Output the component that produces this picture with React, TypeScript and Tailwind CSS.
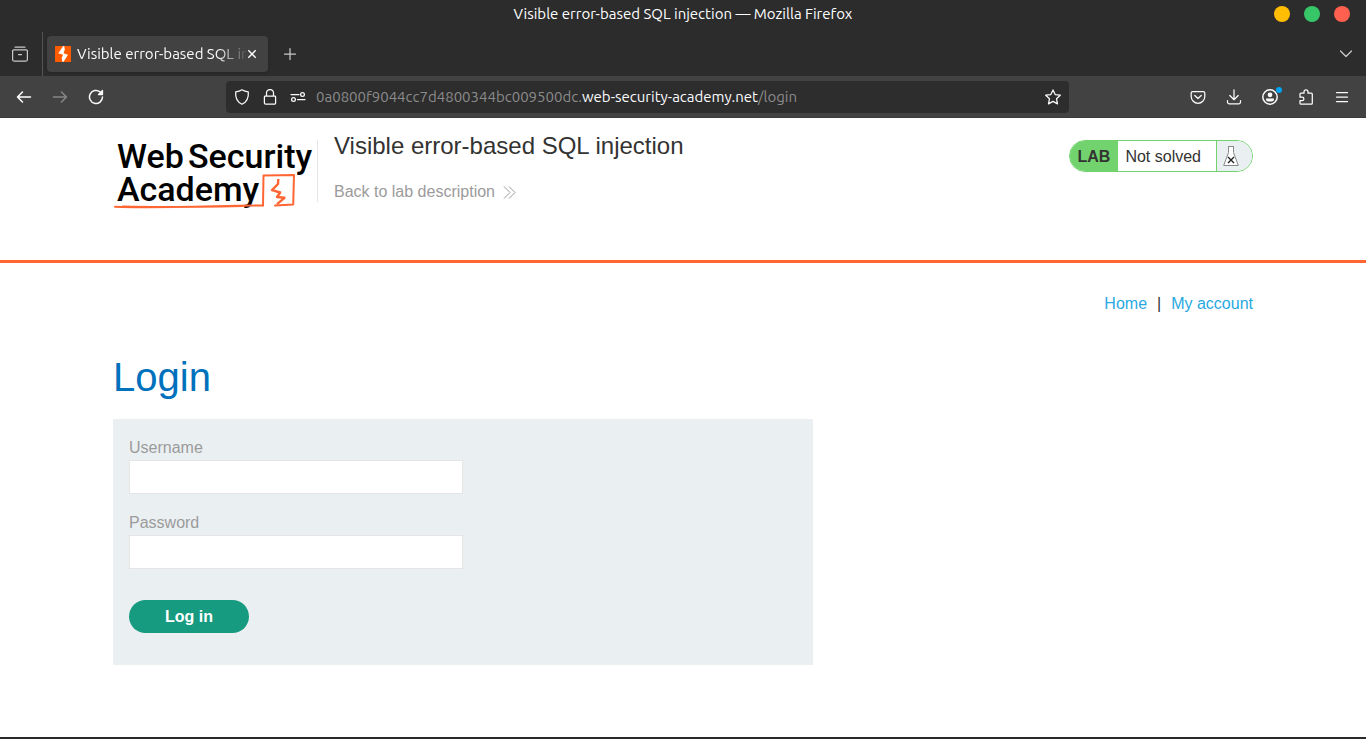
import type { ReactNode } from "react";

const chromeFont = "font-['Ubuntu','Noto_Sans',sans-serif]";

function Icon({ children, className = "" }: { children: ReactNode; className?: string }) {
  return (
    <svg
      viewBox="0 0 16 16"
      className={`size-4 shrink-0 ${className}`}
      fill="none"
      stroke="currentColor"
      strokeWidth="1.25"
      strokeLinecap="round"
      strokeLinejoin="round"
      aria-hidden="true"
    >
      {children}
    </svg>
  );
}

function TitleBar() {
  return (
    <div className="grid h-7 grid-cols-[1fr_auto_1fr] items-center px-4 text-[15px] text-white">
      <span />
      <span>Visible error-based SQL injection — Mozilla Firefox</span>
      <div className="flex justify-end gap-[14px]">
        <button aria-label="Minimize" className="size-4 rounded-full bg-[#ffbd04]" />
        <button aria-label="Maximize" className="size-4 rounded-full bg-[#38c768]" />
        <button aria-label="Close" className="size-4 rounded-full bg-[#ff6050]" />
      </div>
    </div>
  );
}

function TabBar() {
  return (
    <div className="flex h-12 items-center text-[#fbfbfe]">
      <button aria-label="Firefox View" className="mt-1 ml-3 text-[#c8c8c8]">
        <Icon>
          <path d="M3 1.100h10M1.800 3.800h12.400a1.200 1.200 0 0 1 1.200 1.200v8.400a1.800 1.800 0 0 1-1.800 1.800H2.400a1.800 1.800 0 0 1-1.800-1.800V5a1.200 1.200 0 0 1 1.200-1.200zM6.500 8.500h3" />
        </Icon>
      </button>
      <div className="mt-1 ml-[14px] h-11 w-px bg-[#545454]" />
      <div className="mt-1 ml-1 flex h-9 w-[221px] items-center rounded bg-[#424242] px-2 shadow">
        <svg viewBox="0 0 16 16" className="size-4 shrink-0" aria-hidden="true">
          <rect width="16" height="16" fill="#ff5c00" />
          <path d="M8.200 0L3.300 7.200l4.800 1.500L6.600 12l1 4h.8L13 8.800 8.600 7.200 9.800 3.600 9.200 0z" fill="#fff" />
        </svg>
        <span className="ml-1.5 w-[169px] overflow-hidden text-[15px] leading-6 whitespace-nowrap [mask-image:linear-gradient(to_right,black_140px,transparent_172px)]">
          Visible error-based SQL injection
        </span>
        <button aria-label="Close tab" className="ml-px">
          <svg viewBox="0 0 10 10" className="size-[10px]" stroke="currentColor" strokeWidth="1.400" aria-hidden="true">
            <path d="M1.300 1.300l7.400 7.400M8.700 1.300L1.300 8.700" />
          </svg>
        </button>
      </div>
      <button aria-label="New tab" className="mt-1 ml-[14px] text-[#c8c8c8]">
        <Icon>
          <path d="M8 2.500v11M2.500 8h11" />
        </Icon>
      </button>
      <button aria-label="List all tabs" className="mt-1 mr-3 ml-auto text-[#c8c8c8]">
        <Icon>
          <path d="M2.500 5L8 10.500 13.500 5" />
        </Icon>
      </button>
    </div>
  );
}

function NavBar() {
  return (
    <div className="flex h-[42px] items-center border-b border-[#3a3a3a] bg-[#424242] px-4 text-[#fbfbfe]">
      <div className="flex gap-5">
        <button aria-label="Back">
          <Icon className="text-white">
            <path strokeWidth="1.500" d="M1.500 8h13M6.500 3l-5 5 5 5" />
          </Icon>
        </button>
        <button aria-label="Forward">
          <Icon className="text-[#868686]">
            <path strokeWidth="1.500" d="M1.500 8h13M9.500 3l5 5-5 5" />
          </Icon>
        </button>
        <button aria-label="Reload">
          <Icon>
            <path strokeWidth="1.500" d="M14.500 8A6.500 6.500 0 1 1 12 2.800" />
            <path d="M14.500 1.500v4h-4z" fill="currentColor" />
          </Icon>
        </button>
      </div>
      <div className="ml-[122px] flex h-8 w-full max-w-[843px] items-center rounded bg-[#2d2d2d] px-2">
        <Icon>
          <path d="M8 .8C6.300 2 4 2.700 1.700 2.900 1.200 8.500 3.500 13.200 8 15.300c4.500-2.100 6.800-6.800 6.300-12.400C12 2.700 9.700 2 8 .8z" />
        </Icon>
        <Icon className="ml-3">
          <path d="M4.500 7V4a3.500 3.500 0 0 1 7 0v3M3.200 7.200h9.600a.8.800 0 0 1 .8.800v6a1.200 1.200 0 0 1-1.200 1.200H3.600A1.200 1.200 0 0 1 2.400 14V8a.8.800 0 0 1 .8-.8z" />
        </Icon>
        <Icon className="ml-3">
          <path d="M1 5.500h8M7.500 10.500h7.500" />
          <circle cx="12.500" cy="5.500" r="1.900" />
          <circle cx="3.500" cy="10.500" r="1.900" />
        </Icon>
        <div className="ml-2.5 text-[15px] leading-6 whitespace-nowrap text-[#8b8b8b]">
          0a0800f9044cc7d4800344bc009500dc.<span className="text-[#fbfbfe]">web-security-academy.net</span>/login
        </div>
        <button aria-label="Bookmark this page" className="ml-auto">
          <Icon>
            <path d="M8 .9l2.200 4.700 5.100.6-3.800 3.500 1 5.200L8 12.400l-4.500 2.500 1-5.200L.7 6.200l5.100-.6z" />
          </Icon>
        </button>
      </div>
      <div className="ml-auto flex gap-5">
        <button aria-label="Save to Pocket">
          <Icon>
            <path d="M2.800 2.500h10.400a1.600 1.600 0 0 1 1.600 1.600v3.400a6.800 6.800 0 0 1-13.600 0V4.100a1.600 1.600 0 0 1 1.600-1.600zM4.800 6.500L8 9.500l3.200-3" />
          </Icon>
        </button>
        <button aria-label="Downloads">
          <Icon>
            <path d="M8 .8v9.700M3.800 6.500L8 10.700l4.200-4.200M1.500 11.500v1.600a1.800 1.800 0 0 0 1.800 1.800h9.400a1.800 1.800 0 0 0 1.800-1.800v-1.600" />
          </Icon>
        </button>
        <button aria-label="Account" className="relative">
          <Icon>
            <circle cx="8" cy="8" r="7.200" strokeWidth="1.500" />
            <circle cx="8" cy="5.800" r="2.400" fill="currentColor" stroke="none" />
            <path d="M4 9.500h8v.8a2.200 2.200 0 0 1-2.200 2.200H6.200A2.200 2.200 0 0 1 4 10.300z" fill="currentColor" stroke="none" />
          </Icon>
          <span className="absolute -top-0.5 -right-1 size-1.5 rounded-full bg-[#00a5f5]" />
        </button>
        <button aria-label="Extensions">
          <Icon>
            <path d="M6 4.200V2.900a2 2 0 0 1 4 0v1.300h3.300a1 1 0 0 1 1 1v9a1 1 0 0 1-1 1H3a1 1 0 0 1-1-1v-2.600h2.200a1.700 1.700 0 0 0 0-3.400H2V5.200a1 1 0 0 1 1-1z" />
          </Icon>
        </button>
        <button aria-label="Open application menu">
          <Icon>
            <path d="M2.500 3.500h11M2.500 8h11M2.500 12.500h11" />
          </Icon>
        </button>
      </div>
    </div>
  );
}

function Logo() {
  return (
    <svg viewBox="0 -6 200 80" className="h-20 w-[200px]" role="img" aria-label="Web Security Academy">
      <g className="font-[Roboto,sans-serif] text-[34px] font-medium" fill="#000">
        <text x="4" y="30">Web</text>
        <text x="75" y="30">Security</text>
        <text x="4" y="63">Academy</text>
      </g>
      <g fill="none" stroke="#ff6633" strokeWidth="2" strokeLinejoin="round" strokeLinecap="round">
        <path d="M2 68.800c40 1.500 100-.8 148-1.300M10 68.500c40 1 80 .3 120-.5" />
        <path d="M150 67.500L150.500 37.500 181 37l-.8 29.500L162 67.500" />
      </g>
      <path
        d="M165.300 41l-.3 5-6 6.200 8.200 2.300-3.200 4.500 7.500.8-7.500 6.400"
        fill="none"
        stroke="#ff6633"
        strokeWidth="2.400"
        strokeLinejoin="round"
      />
    </svg>
  );
}

function LabHeader() {
  return (
    <header className="border-b-[3px] border-[#ff6633]">
      <div className="mx-auto flex h-[142px] max-w-[1140px] items-start pt-[14px]">
        <a href="#academy">
          <Logo />
        </a>
        <div className="mt-2 ml-1 flex h-[62px] flex-col justify-between border-l border-[#e5e5e5] pl-4">
          <h2 className="-mt-2 text-2xl leading-7">Visible error-based SQL injection</h2>
          <a href="#description" className="flex items-center gap-2 text-base leading-5 text-[#9b9b9b]">
            Back to lab description
            <svg viewBox="0 0 13 13" className="size-[13px]" fill="none" stroke="currentColor" aria-hidden="true">
              <path d="M1 .5l6 6-6 6M6 .5l6 6-6 6" />
            </svg>
          </a>
        </div>
        <div className="mt-2 ml-auto flex h-8 overflow-hidden rounded-full border border-[#72d36e] text-base leading-8">
          <span className="bg-[#72d36e] px-2 font-bold">LAB</span>
          <span className="pr-[15px] pl-[7px]">Not solved</span>
          <span className="flex w-9 items-center border-l border-[#72d36e] bg-[#eaeff2] pl-1.5">
            <svg viewBox="0 0 16 20" className="h-5 w-4" fill="#fff" stroke="#888" aria-hidden="true">
              <path d="M5 .5h6M5.500.5v6L.7 19.500h14.600L10.500 6.500v-6" />
              <path d="M5 11l6 6M11 11l-6 6" stroke="#222" strokeWidth="1.400" />
            </svg>
          </span>
        </div>
      </div>
    </header>
  );
}

function Field({ id, label, type }: { id: string; label: string; type: string }) {
  return (
    <div className="flex flex-col">
      <label htmlFor={id} className="leading-6 text-[#9b9b9b]">
        {label}
      </label>
      <input id={id} name={id} type={type} className="h-[34px] w-[334px] border border-[#e5e5e5] bg-white px-2" />
    </div>
  );
}

export default function App() {
  return (
    <div className="flex min-h-screen flex-col bg-white font-['Liberation_Sans',Arial,sans-serif] text-base text-[#333332]">
      <div className={`bg-[#2c2c2c] ${chromeFont}`}>
        <TitleBar />
        <TabBar />
        <NavBar />
      </div>
      <LabHeader />
      <main className="mx-auto w-full max-w-[1140px] flex-1 pt-[29px]">
        <nav className="flex justify-end gap-[10px] leading-6">
          <a href="#home" className="text-[#29a9e1]">Home</a>
          <span>|</span>
          <a href="#account" className="text-[#29a9e1]">My account</a>
        </nav>
        <h1 className="mt-[35px] text-[40px] leading-[52px] text-[#0071bc]">Login</h1>
        <form className="mt-4 flex max-w-[700px] flex-col gap-[17px] bg-[#eaeff2] px-4 pt-[17px] pb-8" onSubmit={(e) => e.preventDefault()}>
          <Field id="username" label="Username" type="text" />
          <Field id="password" label="Password" type="password" />
          <button type="submit" className="mt-[14px] h-[33px] w-[120px] rounded-full bg-[#179b80] font-bold text-white">
            Log in
          </button>
        </form>
      </main>
      <div className="h-0.5 bg-[#2b292a]" />
    </div>
  );
}
